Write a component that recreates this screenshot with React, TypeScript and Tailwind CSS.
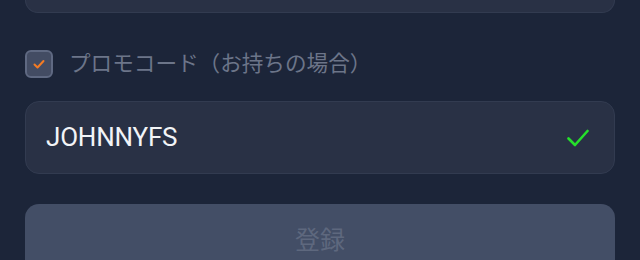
export default function App() {
  return (
    <div className="w-[640px] h-[260px] overflow-hidden bg-[#1c2539] px-[25px] flex flex-col font-['Roboto','Noto_Sans_CJK_JP',sans-serif]">
      {/* Previous field, scrolled mostly out of view */}
      <div className="h-[13px] shrink-0 rounded-b-[14px] bg-[#293145] border border-t-0 border-[#323b50]" />

      {/* Promo code toggle */}
      <label className="mt-[37px] flex items-center gap-[16px] h-[28px]">
        <span className="w-[28px] h-[28px] shrink-0 rounded-[6px] bg-[#434c63] border-2 border-[#5f6982] flex items-center justify-center">
          <svg width="16" height="16" viewBox="0 0 16 16" fill="none">
            <path d="M3.5 8.5l3 3L12.5 5" stroke="#f47b24" strokeWidth="2" strokeLinecap="round" strokeLinejoin="round" />
          </svg>
        </span>
        <span className="text-[21.6px] text-[#6c7589] font-['Noto_Sans_CJK_JP',sans-serif] leading-none pb-[4px]">
          プロモコード（お持ちの場合）
        </span>
      </label>

      {/* Promo code input */}
      <div className="mt-[23px] h-[73px] shrink-0 rounded-[14px] bg-[#293145] border border-[#323b50] flex items-center justify-between pl-[20px] pr-[25px]">
        <span className="text-[26px] text-[#f2f4f7] tracking-[-0.2px]">JOHNNYFS</span>
        <svg width="22" height="18" viewBox="0 0 22 18" fill="none">
          <path d="M1.5 9.5l6.5 6.5L20.5 2" stroke="#25e02b" strokeWidth="2.6" strokeLinecap="round" strokeLinejoin="round" />
        </svg>
      </div>

      {/* Submit */}
      <button className="mt-[30px] h-[72px] shrink-0 rounded-[14px] bg-[#434e66] flex items-center justify-center">
        <span className="text-[25px] leading-none text-[#5e687e] font-['Noto_Sans_CJK_JP',sans-serif] pb-[4px]">登録</span>
      </button>
    </div>
  );
}
